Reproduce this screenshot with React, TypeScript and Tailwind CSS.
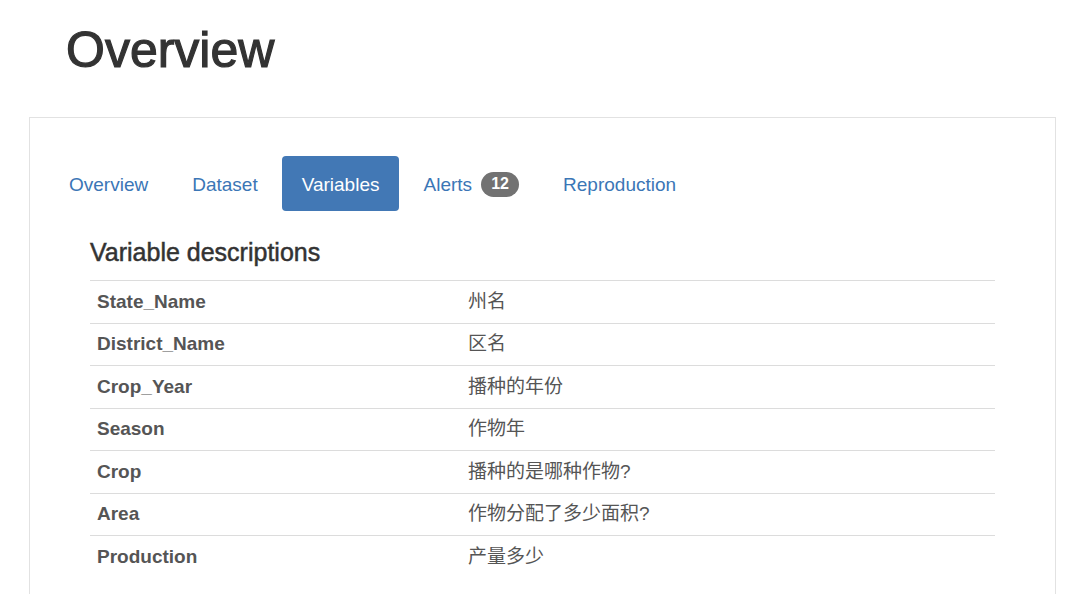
const font = { fontFamily: '"Liberation Sans", "Noto Sans CJK SC", Arial, sans-serif' };

const tabs = ['Overview', 'Dataset', 'Variables', 'Alerts', 'Reproduction'];

const rows = [
  ['State_Name', '州名'],
  ['District_Name', '区名'],
  ['Crop_Year', '播种的年份'],
  ['Season', '作物年'],
  ['Crop', '播种的是哪种作物?'],
  ['Area', '作物分配了多少面积?'],
  ['Production', '产量多少'],
];

export default function App() {
  return (
    <div className="h-[594px] w-[1080px] overflow-hidden bg-white text-[#333]" style={font}>
      <h1 className="pl-[66px] pt-[22px] text-[50px] leading-[56px] text-[#333] [-webkit-text-stroke:1.2px_#333]">Overview</h1>
      <div className="mr-[24px] ml-[29px] mt-[39px] border border-[#e2e2e2] px-[19px] pt-[38px]">
        <div className="flex items-center gap-1">
          {tabs.map((t) =>
            t === 'Variables' ? (
              <div key={t} className="flex h-[55px] items-center rounded-[4px] bg-[#4278b5] px-[20px] pt-[3px] text-[19px] text-white">
                {t}
              </div>
            ) : (
              <div key={t} className="flex h-[55px] items-center px-[20px] pt-[3px] text-[19px] text-[#3b76b6]">
                {t}
                {t === 'Alerts' && (
                  <span className="ml-[9px] -mt-[2px] flex h-[25px] w-[38px] items-center justify-center rounded-full bg-[#727272] text-[16px] font-bold text-white">
                    12
                  </span>
                )}
              </div>
            )
          )}
        </div>
        <div className="mx-[41px] pb-10">
          <h4 className="mt-[27px] mb-[14px] text-[25px] leading-[28px] text-[#333] [-webkit-text-stroke:0.5px_#333]">Variable descriptions</h4>
          <div>
            {rows.map(([k, v]) => (
              <div key={k} className="flex h-[42.5px] items-center border-t border-[#dcdcdc] text-[19px]">
                <div className="w-[371px] pl-[7px] font-bold text-[#555]">{k}</div>
                <div className="pl-[7px] text-[#555]">{v}</div>
              </div>
            ))}
          </div>
        </div>
      </div>
    </div>
  );
}
